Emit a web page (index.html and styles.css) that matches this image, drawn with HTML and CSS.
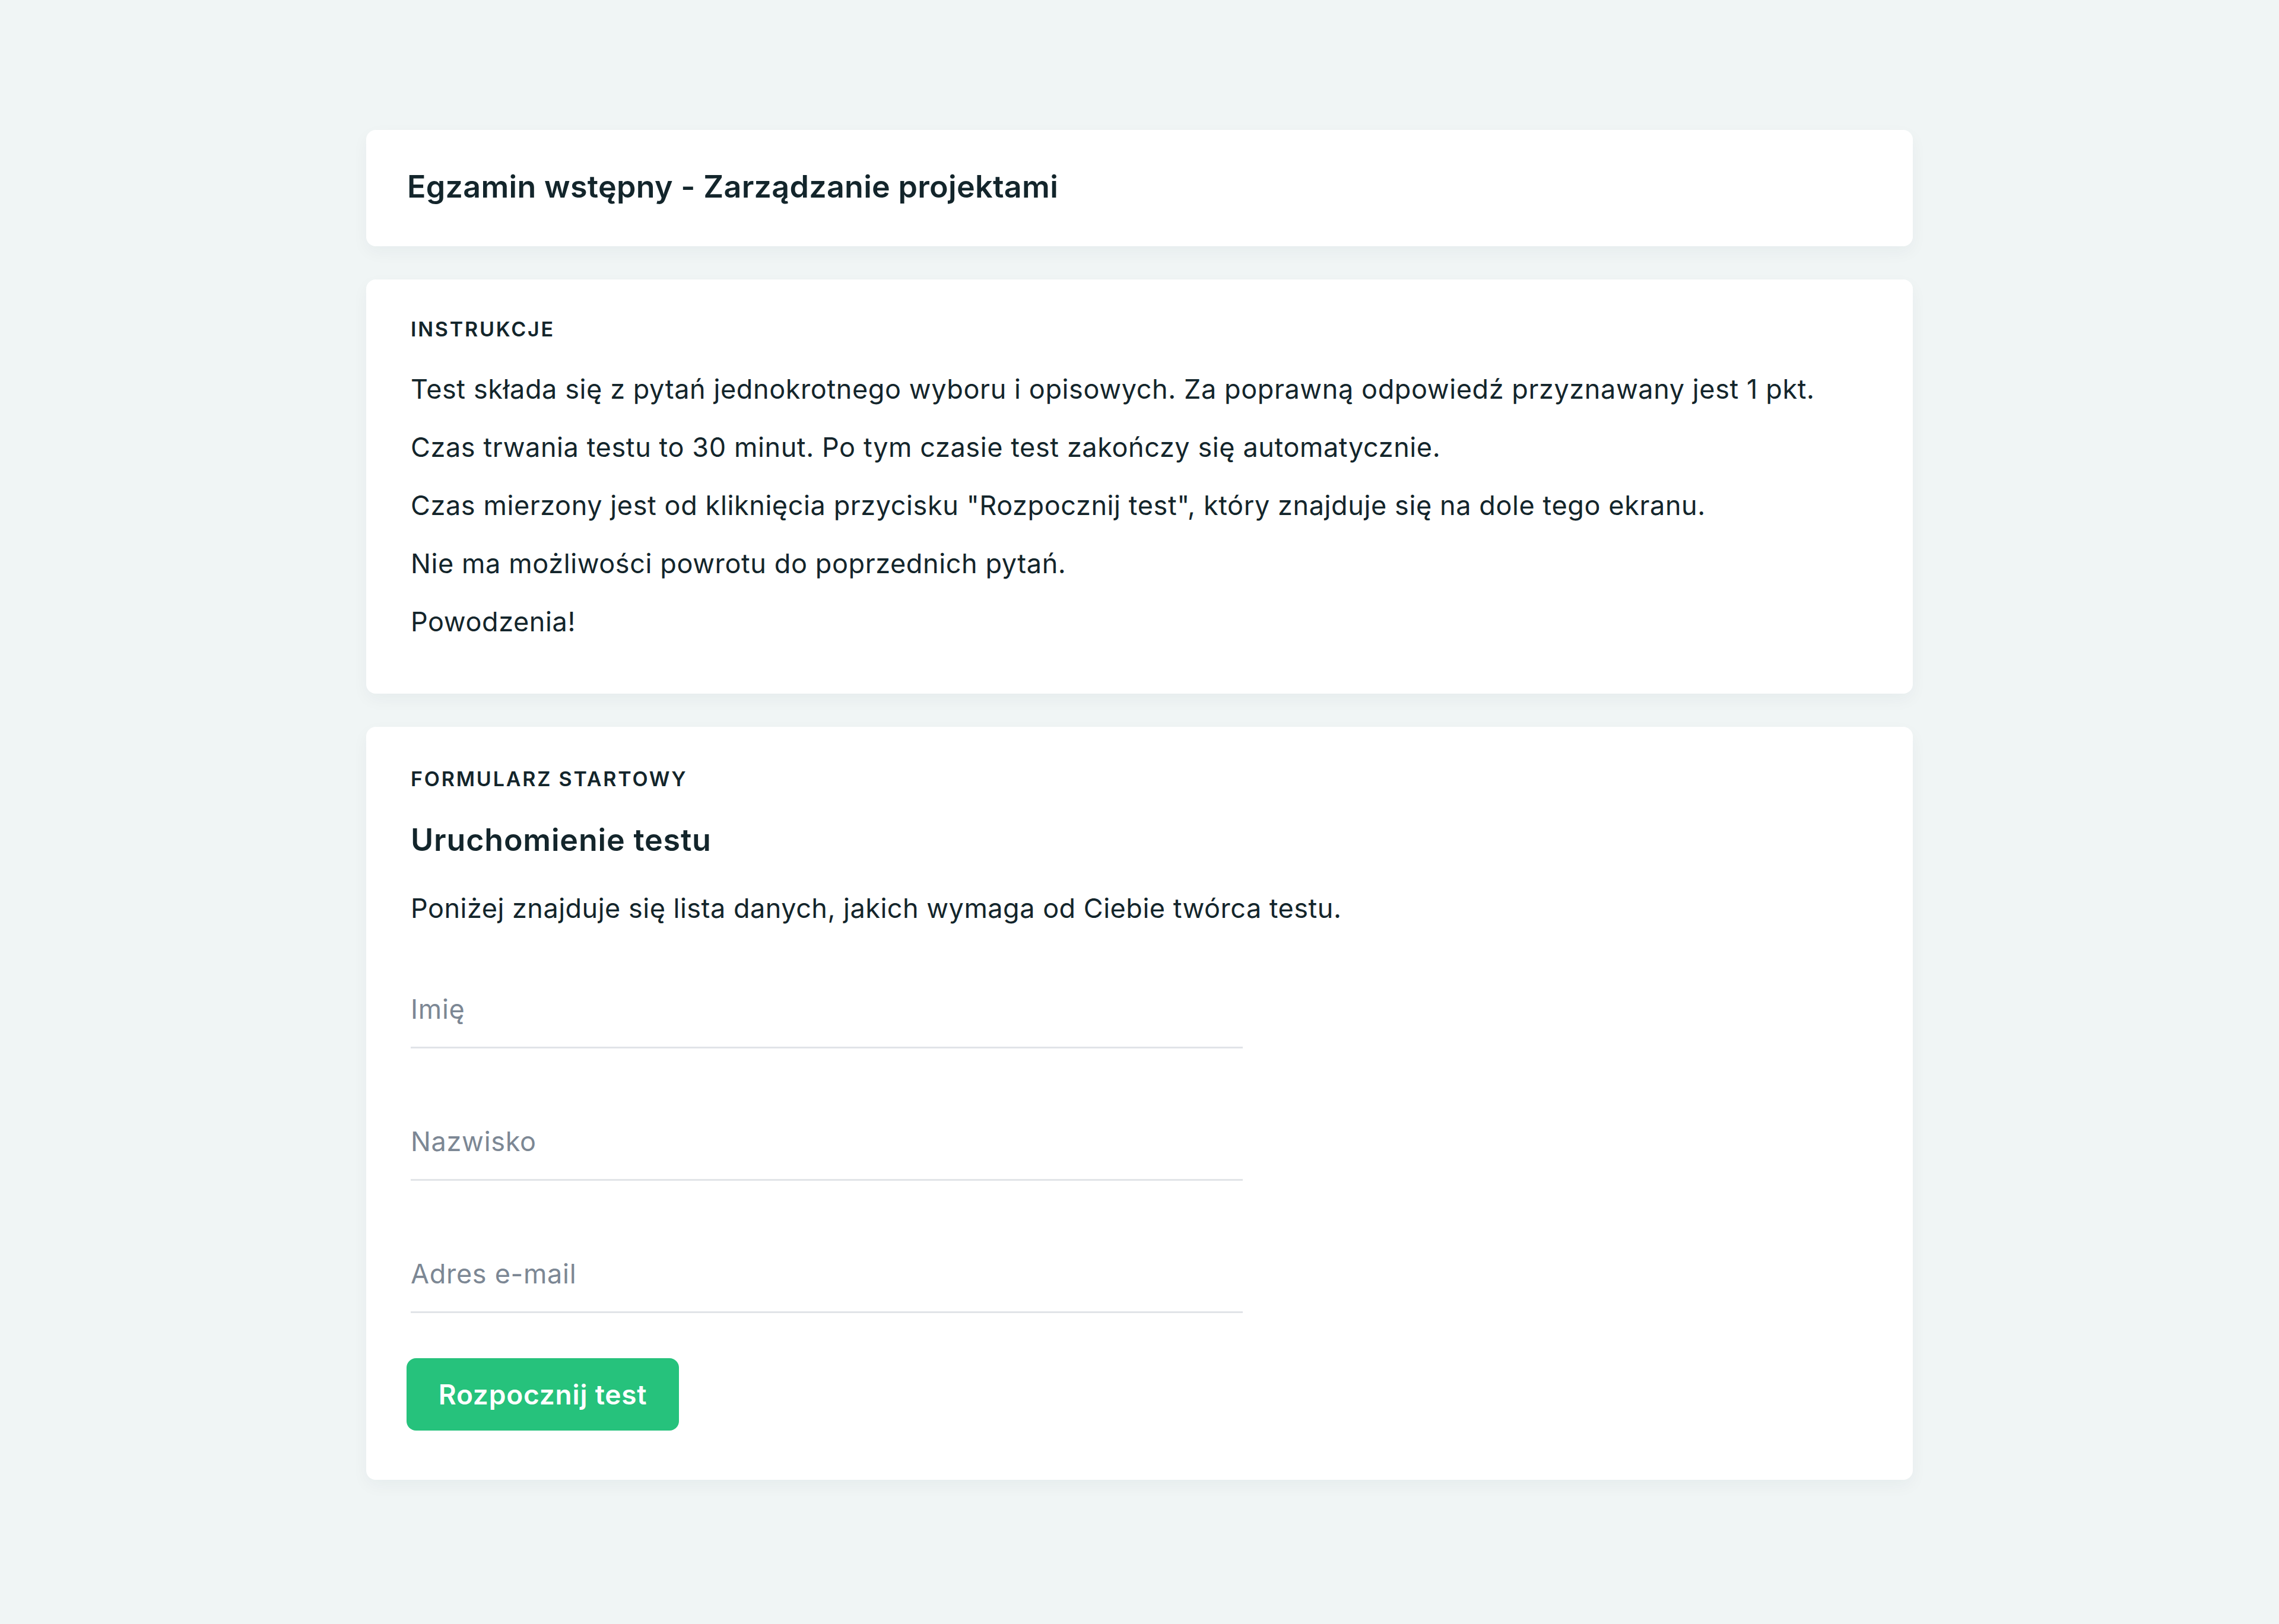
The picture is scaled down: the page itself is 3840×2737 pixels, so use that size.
FILE: index.html
```html
<!DOCTYPE html>
<html lang="pl">
<head>
<meta charset="utf-8">
<title>Egzamin wstępny - Zarządzanie projektami</title>
<link rel="stylesheet" href="styles.css">
</head>
<body>
<main class="page">
  <header class="card card-title">
    <h1 class="exam-title">Egzamin wstępny - Zarządzanie projektami</h1>
  </header>

  <section class="card card-section">
    <h2 class="section-label">INSTRUKCJE</h2>
    <p class="body-line">Test składa się z pytań jednokrotnego wyboru i opisowych. Za poprawną odpowiedź przyznawany jest 1 pkt.</p>
    <p class="body-line">Czas trwania testu to 30 minut. Po tym czasie test zakończy się automatycznie.</p>
    <p class="body-line">Czas mierzony jest od kliknięcia przycisku "Rozpocznij test", który znajduje się na dole tego ekranu.</p>
    <p class="body-line">Nie ma możliwości powrotu do poprzednich pytań.</p>
    <p class="body-line">Powodzenia!</p>
  </section>

  <section class="card card-section card-form">
    <h2 class="section-label">FORMULARZ STARTOWY</h2>
    <h3 class="form-heading">Uruchomienie testu</h3>
    <p class="body-line form-desc">Poniżej znajduje się lista danych, jakich wymaga od Ciebie twórca testu.</p>
    <form class="start-form">
      <input class="field" type="text" placeholder="Imię">
      <input class="field" type="text" placeholder="Nazwisko">
      <input class="field" type="email" placeholder="Adres e-mail">
      <button class="btn-start" type="button">Rozpocznij test</button>
    </form>
  </section>
</main>
</body>
</html>
```

FILE: styles.css
```css
* { box-sizing: border-box; }

html, body {
  margin: 0;
  padding: 0;
}

body {
  background: #f0f5f5;
  font-family: Inter, "Noto Sans", "Liberation Sans", sans-serif;
  color: #13252b;
  min-height: 2737px;
}

.page {
  width: 2606px;
  margin: 0 auto;
  padding-top: 219px;
  display: flex;
  flex-direction: column;
  gap: 56px;
}

.card {
  background: #ffffff;
  border-radius: 16px;
  box-shadow: 0 10px 28px rgba(30, 50, 60, 0.045);
}

.card-title {
  height: 196px;
  display: flex;
  align-items: center;
  padding: 0 69px 4px;
}

.exam-title {
  margin: 0;
  font-size: 52px;
  font-weight: 600;
  letter-spacing: 0.3px;
  line-height: 70px;
}

.card-section {
  padding: 59px 75px 72px;
}

.section-label {
  margin: 0 0 27px;
  font-size: 34px;
  line-height: 50px;
  font-weight: 600;
  letter-spacing: 2.8px;
}

.body-line {
  margin: 0;
  font-size: 45px;
  line-height: 98px;
  font-weight: 400;
  letter-spacing: 0.6px;
}

.card-form {
  padding-top: 63px;
  padding-bottom: 83px;
}

.form-heading {
  margin: 43px 0 0;
  font-size: 52px;
  line-height: 70px;
  font-weight: 600;
  letter-spacing: 0.8px;
}

.form-desc {
  margin-top: 31px;
  letter-spacing: 0.5px;
}

.start-form {
  display: flex;
  flex-direction: column;
  align-items: flex-start;
  margin-top: 57px;
  gap: 93px;
}

.field {
  display: block;
  width: 1402px;
  height: 130px;
  padding: 0;
  border: none;
  border-bottom: 3px solid #e1e4e8;
  background: transparent;
  font-family: inherit;
  font-size: 45px;
  color: #13252b;
  letter-spacing: 0.7px;
  outline: none;
}

.field::placeholder {
  color: #7c8794;
  opacity: 1;
}

.btn-start {
  margin-top: -17px;
  margin-left: -7px;
  width: 459px;
  height: 122px;
  border: none;
  border-radius: 16px;
  background: #26c27c;
  color: #ffffff;
  font-family: inherit;
  font-size: 46px;
  font-weight: 600;
  letter-spacing: 0.8px;
  cursor: pointer;
}
```
